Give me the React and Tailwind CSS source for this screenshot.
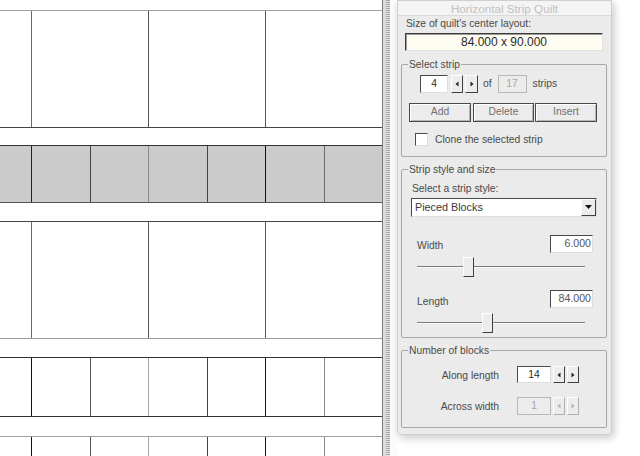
import React from "react";

const F = "font-['Liberation_Sans',Arial,sans-serif]";

function QuiltRow({ h, cells, top, bottom, gray }) {
  return (
    <div className={`flex shrink-0 ${h} border-t border-b ${top} ${bottom} ${gray ? "bg-[#cbcbcb]" : "bg-white"}`}>
      <div className="w-[31px] shrink-0" />
      {cells.map((c, i) => (
        <div key={i} className={`flex-1 border-l ${c}`} />
      ))}
    </div>
  );
}

function Spin({ dir, disabled, w = "w-[12px]", h = "h-[18px]" }) {
  return (
    <div
      className={`${w} ${h} flex items-center justify-center bg-[#ececec] border border-t-white border-l-white ${
        disabled ? "border-r-[#b0b0b0] border-b-[#b0b0b0]" : "border-r-[#404040] border-b-[#404040]"
      }`}
    >
      <svg width="4" height="6" viewBox="0 0 4 6">
        <path
          d={dir === "l" ? "M3.5 0.5 L0.5 3 L3.5 5.5Z" : "M0.5 0.5 L3.5 3 L0.5 5.5Z"}
          fill={disabled ? "#b0b0b0" : "#222"}
        />
      </svg>
    </div>
  );
}

function Sunken({ className, children }) {
  return (
    <div
      className={`border border-t-[#4a4a4a] border-l-[#4a4a4a] border-r-[#dedede] border-b-[#dedede] bg-white ${className}`}
    >
      {children}
    </div>
  );
}

function Btn({ w, children }) {
  return (
    <div
      className={`${w} h-[19px] flex items-center justify-center border border-[#4a4a4a] bg-[#ececec] shadow-[inset_1px_1px_0_#fff,inset_-1px_-1px_0_#b5b5b5] text-[#707070]`}
    >
      {children}
    </div>
  );
}

function Slider({ pos }) {
  return (
    <div className="relative ml-[15px] w-[168px] h-[20px] flex items-center">
      <div className="w-full h-[2px] border-t border-t-[#7a7a7a] border-b border-b-white" />
      <div
        className="absolute top-0 w-[11px] h-[20px] bg-[#ececec] border border-t-white border-l-white border-r-[#404040] border-b-[#404040]"
        style={{ left: pos }}
      />
    </div>
  );
}

function Group({ title, className, children }) {
  return (
    <fieldset className={`ml-[3px] mr-[4px] border border-[#a8a8a8] rounded-[2px] ${className}`}>
      <legend className="ml-[6px] px-[1px] leading-[13px] text-[#4a4a4a]">{title}</legend>
      {children}
    </fieldset>
  );
}

export default function App() {
  const big = ["border-l-[#6a6a6a]", "border-l-[#555]", "border-l-[#555]"];
  const grayCells = [
    "border-l-[#222]",
    "border-l-[#444]",
    "border-l-[#8a8a8a]",
    "border-l-[#444]",
    "border-l-[#111]",
    "border-l-[#6a6a6a]",
  ];
  const smallCells = [
    "border-l-[#111]",
    "border-l-[#555]",
    "border-l-[#a8a8a8]",
    "border-l-[#444]",
    "border-l-[#111]",
    "border-l-[#888]",
  ];
  return (
    <div className={`w-[640px] h-[456px] overflow-hidden bg-white flex ${F}`}>
      {/* canvas */}
      <div className="w-[383px] shrink-0 h-full overflow-hidden border-r border-r-[#7a7a7a] flex flex-col bg-white">
        <div className="h-[10px] shrink-0" />
        <QuiltRow h="h-[118px]" cells={big} top="border-t-[#a0a0a0]" bottom="border-b-[#444]" />
        <div className="h-[17px] shrink-0" />
        <QuiltRow h="h-[58px]" cells={grayCells} top="border-t-[#333]" bottom="border-b-[#555]" gray />
        <div className="h-[18px] shrink-0" />
        <QuiltRow h="h-[118px]" cells={big} top="border-t-[#444]" bottom="border-b-[#999]" />
        <div className="h-[18px] shrink-0" />
        <QuiltRow h="h-[60px]" cells={smallCells} top="border-t-[#333]" bottom="border-b-[#333]" />
        <div className="h-[19px] shrink-0" />
        <QuiltRow h="h-[40px]" cells={smallCells} top="border-t-[#a0a0a0]" bottom="border-b-[#fff]" />
      </div>
      <div className="w-[3px] shrink-0 h-full bg-[#dcdcdc]" />
      <div className="w-[4px] shrink-0 h-full bg-[repeating-linear-gradient(to_bottom,#a8a8a8_0px,#a8a8a8_1px,#e2e2e2_1px,#e2e2e2_2px)]" />
      <div className="w-[7px] shrink-0 h-full bg-[#fbfbfb]" />

      {/* panel */}
      <div className="w-[215px] shrink-0 self-start bg-[#ebebeb] border border-[#cfcfcf] rounded-b-[4px] shadow-[2px_3px_8px_rgba(0,0,0,0.22)] text-[10.3px] text-[#4a4a4a] pb-[6px]">
        <div className="h-[15px] leading-[15px] bg-[#f4f4f4] border-b border-b-[#dadada] text-center text-[11.7px] text-[#c2c2c2]">
          Horizontal Strip Quilt
        </div>
        <div className="mt-[1px] pl-[8px] leading-[13px]">Size of quilt's center layout:</div>
        <div className="mt-[3px] ml-[7px] w-[198px] h-[18px] flex items-center justify-center bg-[#fffdf1] border border-t-[#3c3c3c] border-l-[#3c3c3c] border-r-[#e2e2e2] border-b-[#e2e2e2] shadow-[inset_1px_1px_0_#9a9a9a] text-[12px] text-[#2a2a2a]">
          84.000 x 90.000
        </div>

        <Group title="Select strip" className="mt-[7px] pb-[10px]">
          <div className="flex items-center pt-[3.5px] pl-[18px]">
            <Sunken className="w-[28px] h-[18px] flex items-center justify-center text-[#2a2a2a]">4</Sunken>
            <div className="ml-[3px]"><Spin dir="l" /></div>
            <div className="ml-[2px]"><Spin dir="r" w="w-[13px]" /></div>
            <span className="ml-[5px] leading-[13px]">of</span>
            <div className="ml-[6px] w-[29px] h-[18px] flex items-center justify-center border border-[#b8b8b8] bg-[#ececec] text-[#a6a6a6]">
              17
            </div>
            <span className="ml-[6px] leading-[13px]">strips</span>
          </div>
          <div className="flex mt-[10px] pl-[7px]">
            <Btn w="w-[62px]">Add</Btn>
            <div className="ml-[2px]"><Btn w="w-[61px]">Delete</Btn></div>
            <div className="ml-[1px]"><Btn w="w-[62px]">Insert</Btn></div>
          </div>
          <div className="flex items-center mt-[11px] pl-[13px]">
            <Sunken className="w-[13px] h-[13px]" />
            <span className="ml-[7px] leading-[13px]">Clone the selected strip</span>
          </div>
        </Group>

        <Group title="Strip style and size" className="mt-[6px] pb-[4px]">
          <div className="pt-[6px] pl-[10px] leading-[13px]">Select a strip style:</div>
          <Sunken className="mt-[3px] ml-[9px] w-[186px] h-[19px] flex items-center justify-between">
            <span className="pl-[3px] text-[10.8px] text-[#3a3a3a]">Pieced Blocks</span>
            <div className="w-[15px] h-[17px] flex items-center justify-center bg-[#ececec] border border-t-white border-l-white border-r-[#404040] border-b-[#404040]">
              <svg width="7" height="4" viewBox="0 0 7 4">
                <path d="M0 0 L7 0 L3.5 4Z" fill="#111" />
              </svg>
            </div>
          </Sunken>
          <div className="mt-[18px] flex items-center justify-between pl-[15px] pr-[13px]">
            <span className="leading-[13px] mt-[3px]">Width</span>
            <Sunken className="w-[43px] h-[18px] flex items-center justify-end pr-[1px] text-[10.6px] text-[#555]">6.000</Sunken>
          </div>
          <div className="mt-[4px]">
            <Slider pos={46} />
          </div>
          <div className="mt-[13px] flex items-center justify-between pl-[15px] pr-[13px]">
            <span className="leading-[13px] mt-[5px]">Length</span>
            <Sunken className="w-[43px] h-[18px] flex items-center justify-end pr-[1px] text-[10.6px] text-[#555]">84.000</Sunken>
          </div>
          <div className="mt-[5px]">
            <Slider pos={65} />
          </div>
        </Group>

        <Group title="Number of blocks" className="mt-[6px] pb-[12px]">
          <div className="flex items-center pt-[9.5px]">
            <span className="w-[97px] text-right leading-[13px] mt-[2px]">Along length</span>
            <Sunken className="ml-[18px] w-[34px] h-[17px] flex items-center justify-center text-[#2a2a2a]">14</Sunken>
            <div className="ml-[2px]"><Spin dir="l" h="h-[17px]" /></div>
            <div className="ml-[2px]"><Spin dir="r" h="h-[17px]" /></div>
          </div>
          <div className="flex items-center mt-[14px]">
            <span className="w-[97px] text-right leading-[13px]">Across width</span>
            <div className="ml-[18px] w-[34px] h-[18px] flex items-center justify-center border border-[#b8b8b8] bg-[#ececec] text-[#a6a6a6]">
              1
            </div>
            <div className="ml-[2px]"><Spin dir="l" disabled /></div>
            <div className="ml-[2px]"><Spin dir="r" disabled /></div>
          </div>
        </Group>
      </div>
    </div>
  );
}
